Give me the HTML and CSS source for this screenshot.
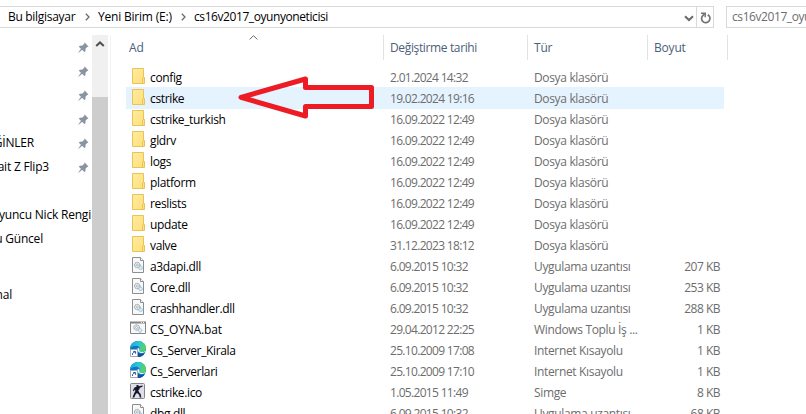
FILE: index.html
```
<!DOCTYPE html>
<html lang="tr">
<head>
<meta charset="utf-8">
<title>cs16v2017_oyunyoneticisi</title>
<link rel="stylesheet" href="styles.css">
</head>
<body>
<svg class="defs" width="0" height="0">
  <defs>
    <linearGradient id="fold" x1="0" y1="0" x2="1" y2="1"><stop offset="0" stop-color="#ffeb9f"/><stop offset="1" stop-color="#fddf7c"/></linearGradient>
    <linearGradient id="edgeTop" x1="0" y1="0.3" x2="1" y2="0.5"><stop offset="0" stop-color="#1ba4e6"/><stop offset=".5" stop-color="#2fc6d4"/><stop offset="1" stop-color="#5bd64c"/></linearGradient>
  </defs>
  <symbol id="folder" viewBox="0 0 16 16"><path d="M2.5.5h11v9h1v6h-12z" fill="url(#fold)" stroke="#e9c353"/><path d="M12.5 15.500v-5.500l1-.5" fill="none" stroke="#e9c353"/></symbol>
  <symbol id="gears" viewBox="0 0 10 9"><circle cx="3.600" cy="3.500" r="2.700" fill="#e8eef2" stroke="#7f8f99" stroke-dasharray="1.200 .5"/><circle cx="3.600" cy="3.500" r="1" fill="#fff" stroke="#8b98a0" stroke-width=".6"/><circle cx="7" cy="6.300" r="1.800" fill="#d9eefa" stroke="#7fb3d3" stroke-dasharray="1 .4"/></symbol>
  <symbol id="dll" viewBox="0 0 16 16"><path d="M2.500.5h8l3 3v12h-11z" fill="#f8f8f8" stroke="#8e8e8e"/><path d="M10.500.5v3h3" fill="#fff" stroke="#8e8e8e"/><use href="#gears" x="3.600" y="4.500" width="10" height="9"/></symbol>
  <symbol id="bat" viewBox="0 0 16 16"><path d="M.5 2.500h15v11H.5z" fill="#f8f8f8" stroke="#858585"/><path d="M0 2.500h16" stroke="#858585" stroke-width="2"/><path d="M11 2.500h1m1 0h1" stroke="#eee"/><use href="#gears" x="3" y="4" width="10" height="9"/></symbol>
  <symbol id="edge" viewBox="0 0 16 16"><circle cx="8" cy="8" r="8" fill="#0d76c8"/><path d="M0 7.500C.5 3 4 0 8 0c5 0 8 3.500 8 7 0 2.800-2 4-4 4-2 0-3-.8-2.600-1.700C10.500 7 9 4.800 6 4.800 3 4.800.8 6 0 7.500z" fill="url(#edgeTop)"/><path d="M6.500 8.500c0 3.500 3 5 5.500 4.600 1.200-.2 2.200-.6 3-1.200C13.500 14.700 11 16 8 16c-3-1-3.500-5.500-1.500-7.500z" fill="#144f99"/><path d="M7.800 7c1.600.2 2 1.300 1.500 2.300-.4.900.6 1.700 2.700 1.700 1.500 0 2.600-.4 3.500-1.300l.3.600c-1.200 1.400-3.300 2-5 1.600C8 11.300 6.800 8.800 7.800 7z" fill="#fff"/><path d="M.5 8.500h7v7h-7z" fill="#fff" stroke="#a3a9b0"/><path d="M2.500 14C2.300 12.300 3 11.300 5 10.900M3.300 10.500h2.300v2.300" fill="none" stroke="#1d5da8" stroke-width="1"/></symbol>
  <symbol id="cs" viewBox="0 0 16 16"><rect x=".5" y=".5" width="14" height="15" rx="1" fill="#dedee6" stroke="#85858b"/><path d="M6.500 2h2v1.300L12.500 2.500v1.300l-2.700 1L9.500 6.300 8.300 7l.7 2.200 1.700 1.800.6 3.500h-1.500l-.7-2.800L7 10 5.500 11.500 4.300 14.500H2.500l1.300-3.500L5.300 8 5 6.500 3.600 8.300 2.800 7.600 4.500 4.500l2-.8z" fill="#14162c"/></symbol>
  <symbol id="pin" viewBox="0 0 11 11"><path d="M6.600.5 10.500 4.400 9.200 5 7.600 6.600 7.400 9.200 6.300 10 4.200 7.800 1 10.600.3 10.500 3 6.800.8 4.700 1.800 3.700 4.500 3.500 6 2z" fill="#8894a0"/></symbol>
</svg>

<header class="toolbar">
  <nav class="address">
    <span class="crumb c1">Bu bilgisayar</span>
    <svg class="sep" width="5" height="8"><path d="M.8.8 4 4 .8 7.200" /></svg>
    <span class="crumb c2">Yeni Birim (E:)</span>
    <svg class="sep" width="5" height="8"><path d="M.8.8 4 4 .8 7.200" /></svg>
    <span class="crumb c3">cs16v2017_oyunyoneticisi</span>
    <svg class="drop" width="10" height="7"><path d="M1 1.200 5 5 9 1.200"/></svg>
    <span class="refresh"><svg width="12" height="12" viewBox="0 0 12 12"><path d="M7.700 2.700A4.200 4.200 0 1 1 3 3.300L4.500 1.800" fill="none" stroke="#747474" stroke-width="1.700"/><path d="M1 1.300h4.200v4" fill="none" stroke="#747474" stroke-width="1.500"/></svg></span>
  </nav>
  <div class="search">cs16v2017_oyunyoneticisi</div>
</header>

<main class="body">
  <aside class="tree">
    <div class="item"><svg class="pin"><use href="#pin"/></svg></div>
    <div class="item"><svg class="pin"><use href="#pin"/></svg></div>
    <div class="item"><svg class="pin"><use href="#pin"/></svg></div>
    <div class="item"><svg class="pin"><use href="#pin"/></svg></div>
    <div class="item"><span class="label w34">ĞİNLER</span><svg class="pin"><use href="#pin"/></svg></div>
    <div class="item"><span class="label w49">ait Z Flip3</span><svg class="pin"><use href="#pin"/></svg></div>
    <div class="item"></div>
    <div class="item"><span class="label w91">oyuncu Nick Rengi</span></div>
    <div class="item"><span class="label w43">u Güncel</span></div>
    <div class="item last"><span class="label w12">nal</span></div>
  </aside>
  <div class="scroll"><svg width="10" height="6"><path d="M1.200 5 5 1.400 8.800 5"/></svg><div class="thumb"></div></div>
  <section class="files">
    <div class="head">
      <div class="h-name">Ad<svg class="sort" width="9" height="5"><path d="M.6 4.400 4.500.7 8.400 4.400"/></svg></div>
      <div class="h-date">Değiştirme tarihi</div><div class="h-type">Tür</div><div class="h-size">Boyut</div>
    </div>
    <div class="list">
      <div class="row"><svg class="ico"><use href="#folder"/></svg><span class="name">config</span><span class="date">2.01.2024 14:32</span><span class="type">Dosya klasörü</span><span class="size"></span></div>
      <div class="row hot"><svg class="ico"><use href="#folder"/></svg><span class="name">cstrike</span><span class="date">19.02.2024 19:16</span><span class="type">Dosya klasörü</span><span class="size"></span>
        <svg class="arrow" width="140" height="46"><path d="M4 22.300 68.500 4V12.500H134.500V31.500H68.500V41z"/></svg></div>
      <div class="row"><svg class="ico"><use href="#folder"/></svg><span class="name">cstrike_turkish</span><span class="date">16.09.2022 12:49</span><span class="type">Dosya klasörü</span><span class="size"></span></div>
      <div class="row"><svg class="ico"><use href="#folder"/></svg><span class="name">gldrv</span><span class="date">16.09.2022 12:49</span><span class="type">Dosya klasörü</span><span class="size"></span></div>
      <div class="row"><svg class="ico"><use href="#folder"/></svg><span class="name">logs</span><span class="date">16.09.2022 12:49</span><span class="type">Dosya klasörü</span><span class="size"></span></div>
      <div class="row"><svg class="ico"><use href="#folder"/></svg><span class="name">platform</span><span class="date">16.09.2022 12:49</span><span class="type">Dosya klasörü</span><span class="size"></span></div>
      <div class="row"><svg class="ico"><use href="#folder"/></svg><span class="name">reslists</span><span class="date">16.09.2022 12:49</span><span class="type">Dosya klasörü</span><span class="size"></span></div>
      <div class="row"><svg class="ico"><use href="#folder"/></svg><span class="name">update</span><span class="date">16.09.2022 12:49</span><span class="type">Dosya klasörü</span><span class="size"></span></div>
      <div class="row"><svg class="ico"><use href="#folder"/></svg><span class="name">valve</span><span class="date">31.12.2023 18:12</span><span class="type">Dosya klasörü</span><span class="size"></span></div>
      <div class="row"><svg class="ico"><use href="#dll"/></svg><span class="name">a3dapi.dll</span><span class="date">6.09.2015 10:32</span><span class="type">Uygulama uzantısı</span><span class="size">207 KB</span></div>
      <div class="row"><svg class="ico"><use href="#dll"/></svg><span class="name">Core.dll</span><span class="date">6.09.2015 10:32</span><span class="type">Uygulama uzantısı</span><span class="size">253 KB</span></div>
      <div class="row"><svg class="ico"><use href="#dll"/></svg><span class="name">crashhandler.dll</span><span class="date">6.09.2015 10:32</span><span class="type">Uygulama uzantısı</span><span class="size">288 KB</span></div>
      <div class="row"><svg class="ico"><use href="#bat"/></svg><span class="name caps">CS_OYNA.bat</span><span class="date">29.04.2012 22:25</span><span class="type">Windows Toplu İş ...</span><span class="size">1 KB</span></div>
      <div class="row"><svg class="ico"><use href="#edge"/></svg><span class="name">Cs_Server_Kirala</span><span class="date">25.10.2009 17:08</span><span class="type">Internet Kısayolu</span><span class="size">1 KB</span></div>
      <div class="row"><svg class="ico"><use href="#edge"/></svg><span class="name">Cs_Serverlari</span><span class="date">25.10.2009 17:10</span><span class="type">Internet Kısayolu</span><span class="size">1 KB</span></div>
      <div class="row"><svg class="ico"><use href="#cs"/></svg><span class="name">cstrike.ico</span><span class="date">1.05.2015 11:49</span><span class="type">Simge</span><span class="size">8 KB</span></div>
      <div class="row"><svg class="ico"><use href="#dll"/></svg><span class="name">dbg.dll</span><span class="date">6.09.2015 10:32</span><span class="type">Uygulama uzantısı</span><span class="size">68 KB</span></div>
    </div>
  </section>
</main>
</body>
</html>
```
FILE: styles.css
```
* { box-sizing: border-box; }
body { margin: 0; width: 806px; height: 414px; overflow: hidden; background: #fff; color: #000; font: 12px/20px "Open Sans", "Noto Sans", sans-serif; letter-spacing: -0.2px; white-space: nowrap; }
.defs { position: absolute; }
svg { display: block; flex: none; }
.toolbar { display: flex; padding-top: 6px; height: 35px; }
.address { display: flex; flex: none; align-items: center; width: 714px; height: 22px; border: 1px solid #d9d9d9; border-left: 0; padding-left: 8px; }
.crumb { flex: none; line-height: 22px; }
.c1 { width: 77px; letter-spacing: -0.3px; }
.c2 { width: 83px; }
.c3 { flex: 1; letter-spacing: -0.42px; }
.sep { margin-right: 8px; fill: none; stroke: #6b6b6b; stroke-width: 1.300; }
.drop { margin: 2px 2px 0 0; fill: none; stroke: #6a6a6a; stroke-width: 2; }
.refresh { width: 17px; height: 20px; border-left: 1px solid #d9d9d9; padding: 5px 0 0 3px; }
.search { flex: none; margin-left: 12px; width: 100px; height: 22px; border: 1px solid #d9d9d9; padding-left: 5px; color: #6d6d6d; letter-spacing: -0.42px; line-height: 20px; overflow: hidden; }
.body { display: flex; height: 379px; }
.tree { width: 92px; flex: none; overflow: hidden; }
.item { display: flex; align-items: center; height: 24px; }
.last { margin-top: 32px; }
.label { display: flex; justify-content: flex-end; flex: none; line-height: 22px; }
.w34 { width: 34px; }
.w49 { width: 49px; }
.w91 { width: 91px; }
.w43 { width: 43px; }
.w12 { width: 12px; }
.pin { width: 11px; height: 11px; margin: 0 3px 0 auto; }
.scroll { width: 16px; flex: none; background: #f0f0f0; padding-top: 6px; }
.scroll svg { margin-left: 3px; fill: none; stroke: #505050; stroke-width: 2; }
.thumb { margin-top: 50px; height: 317px; background: #cdcdcd; }
.files { margin-left: 2px; padding-left: 16px; border-left: 1px solid #f2f2f2; width: 696px; flex: none; }
.head { display: flex; height: 31px; color: #4c607a; line-height: 26px; }
.head > div { height: 25px; border-right: 1px solid #e2e2e2; }
.h-name { width: 257px; padding-left: 2px; position: relative; }
.sort { position: absolute; left: 122px; top: 0; fill: none; stroke: #6b6b6b; }
.h-date { width: 144px; padding-left: 6px; letter-spacing: -0.36px; }
.h-type { width: 120px; padding-left: 6px; }
.h-size { width: 80px; padding-left: 6px; }
.list { margin-left: -1px; }
.row { display: flex; width: 598px; height: 21px; padding-left: 4px; line-height: 23px; color: #6d6d6d; letter-spacing: -0.36px; position: relative; }
.hot { height: 22px; margin-bottom: -1px; background: #e5f3ff; }
.ico { width: 16px; height: 16px; margin-top: 2px; }
.name { width: 240px; padding-left: 4px; color: #000; }
.caps { letter-spacing: -0.15px; }
.date { width: 144px; padding-left: 4px; letter-spacing: -0.68px; }
.type { width: 130px; padding-left: 4px; letter-spacing: -0.34px; }
.size { width: 60px; text-align: right; letter-spacing: -0.5px; }
.arrow { position: absolute; left: 111px; top: -12px; fill: none; stroke: #ed1c24; stroke-width: 5; stroke-linejoin: round; }
```
